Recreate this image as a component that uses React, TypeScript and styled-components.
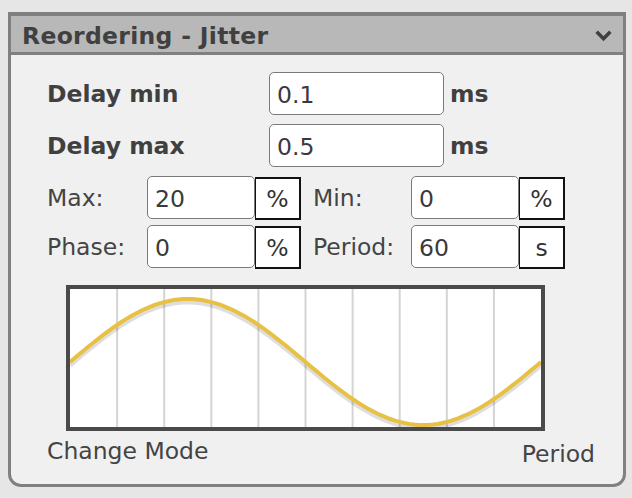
import React from "react";
import styled, { createGlobalStyle } from "styled-components";

const GlobalStyle = createGlobalStyle`
  html, body {
    margin: 0;
    padding: 0;
    background: #e6e6e6;
  }
  body {
    font-family: "DejaVu Sans", Verdana, sans-serif;
    color: #404040;
  }
`;

// one full period of the jitter wave, sampled for the svg path
const buildWave = (w: number, mid: number, amp: number) => {
  const pts: string[] = [];
  for (let i = 0; i <= 100; i++) {
    const x = (w * i) / 100;
    const y = mid - amp * Math.sin((2 * Math.PI * i) / 100);
    pts.push(`${i === 0 ? "M" : "L"}${x.toFixed(1)},${y.toFixed(1)}`);
  }
  return pts.join(" ");
};

const CHART_W = 471;
const CHART_H = 138;

export default function App() {
  const wave = buildWave(CHART_W, 73, 63);
  const gridLines = Array.from({ length: 9 }, (_, i) => ((i + 1) * CHART_W) / 10);

  return (
    <Page>
      <GlobalStyle />
      <Panel>
        <Header>
          <Title>Reordering - Jitter</Title>
          <Chevron viewBox="0 0 20 20">
            <path d="M3.5 6.5 L10 13 L16.5 6.5" fill="none" stroke="#404040" strokeWidth="3.4" />
          </Chevron>
        </Header>
        <Body>
          <DelayRow>
            <DelayLabel>Delay min</DelayLabel>
            <WideInput defaultValue="0.1" />
            <Unit>ms</Unit>
          </DelayRow>
          <DelayRow>
            <DelayLabel>Delay max</DelayLabel>
            <WideInput defaultValue="0.5" />
            <Unit>ms</Unit>
          </DelayRow>
          <ParamGrid>
            <ParamLabel>Max:</ParamLabel>
            <Field>
              <SmallInput defaultValue="20" />
              <UnitBox>%</UnitBox>
            </Field>
            <ParamLabel>Min:</ParamLabel>
            <Field>
              <SmallInput defaultValue="0" />
              <UnitBox>%</UnitBox>
            </Field>
            <ParamLabel>Phase:</ParamLabel>
            <Field>
              <SmallInput defaultValue="0" />
              <UnitBox>%</UnitBox>
            </Field>
            <ParamLabel>Period:</ParamLabel>
            <Field>
              <SmallInput defaultValue="60" />
              <UnitBox>s</UnitBox>
            </Field>
          </ParamGrid>
          <Chart>
            <svg width={CHART_W} height={CHART_H} viewBox={`0 0 ${CHART_W} ${CHART_H}`}>
              {gridLines.map((x) => (
                <line key={x} x1={x} y1={0} x2={x} y2={CHART_H} stroke="#d4d4d4" strokeWidth="2" />
              ))}
              <path d={wave} transform="translate(0,3)" fill="none" stroke="rgba(0,0,0,0.13)" strokeWidth="5" />
              <path d={wave} fill="none" stroke="#e8c144" strokeWidth="4" />
            </svg>
          </Chart>
          <Footer>
            <FooterText>Change Mode</FooterText>
            <FooterText $low>Period</FooterText>
          </Footer>
        </Body>
      </Panel>
    </Page>
  );
}

const Page = styled.div`
  padding: 12px 0 0 8px;
`;

const Panel = styled.div`
  width: 618px;
  box-sizing: border-box;
  border: 3px solid #808080;
  border-top-width: 4px;
  border-radius: 0 0 13px 13px;
  background: #f0f0f0;
  overflow: hidden;
`;

const Header = styled.div`
  height: 33px;
  background: #b8b8b8;
  border-bottom: 3px solid #808080;
  display: flex;
  align-items: center;
  justify-content: space-between;
  padding: 3px 9px 0 11px;
  box-sizing: content-box;
`;

const Title = styled.div`
  font-size: 23.5px;
  font-weight: bold;
  color: #404040;
  letter-spacing: 0.3px;
`;

const Chevron = styled.svg`
  width: 21px;
  height: 21px;
`;

const Body = styled.div`
  padding: 17px 0 0 36px;
  height: 429px;
  box-sizing: border-box;
`;

const DelayRow = styled.div`
  display: flex;
  align-items: center;
  margin-bottom: 9px;
`;

const DelayLabel = styled.div`
  width: 222px;
  font-size: 23.5px;
  font-weight: bold;
`;

const inputBase = `
  box-sizing: border-box;
  height: 43px;
  border: 1.5px solid #7a7a7a;
  border-radius: 5px;
  background: #fff;
  font-family: "DejaVu Sans", Verdana, sans-serif;
  font-size: 23.5px;
  color: #3a3a3a;
  padding: 2px 7px 0;
  outline: none;
`;

const WideInput = styled.input`
  ${inputBase}
  width: 175px;
`;

const Unit = styled.span`
  margin-left: 6px;
  font-size: 23.5px;
  font-weight: bold;
`;

const ParamGrid = styled.div`
  display: grid;
  grid-template-columns: 88px 154px 86px 154px;
  column-gap: 12px;
  row-gap: 5px;
  align-items: center;
  margin-top: 1px;
`;

const ParamLabel = styled.div`
  font-size: 23.5px;
  color: #444;
  white-space: nowrap;
`;

const Field = styled.div`
  display: flex;
  align-items: flex-start;
`;

const SmallInput = styled.input`
  ${inputBase}
  width: 108px;
`;

const UnitBox = styled.div`
  box-sizing: border-box;
  width: 46px;
  height: 43px;
  margin-top: 1px;
  border: 2px solid #111;
  border-left-width: 1px;
  background: #fff;
  display: flex;
  align-items: center;
  justify-content: center;
  font-size: 23.5px;
  color: #333;
`;

const Chart = styled.div`
  margin: 16px 0 0 19px;
  width: fit-content;
  border: 4px solid #4a4a4a;
  background: #fff;
  line-height: 0;
`;

const Footer = styled.div`
  display: flex;
  justify-content: space-between;
  align-items: flex-start;
  padding-right: 28px;
  margin-top: 6px;
`;

const FooterText = styled.div<{ $low?: boolean }>`
  font-size: 23.5px;
  color: #444;
  margin-top: ${({ $low }) => ($low ? "3px" : "0")};
`;
